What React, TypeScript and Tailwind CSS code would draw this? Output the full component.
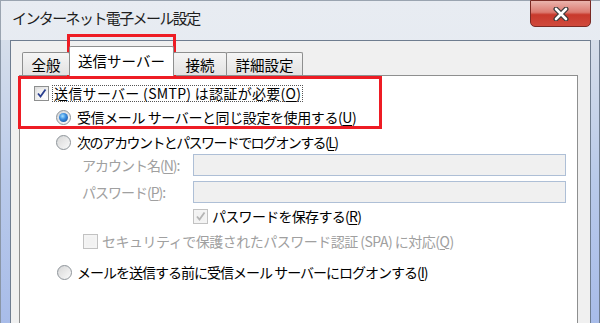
import React from "react";

function Check({ checked, disabled }: { checked?: boolean; disabled?: boolean }) {
  return (
    <span
      className={
        "relative flex h-[15px] w-[15px] shrink-0 items-center justify-center border " +
        (disabled ? "border-[#c2c2c2] bg-[#f4f4f4]" : "border-[#8e8f8f] bg-[linear-gradient(135deg,#dcdcdc,#ffffff)]")
      }
    >
      <span className={"absolute inset-[2px] " + (disabled ? "bg-[#f2f2f2]" : "bg-[linear-gradient(135deg,#e9e9e9,#ffffff)]")} />
      {checked && (
        <svg viewBox="0 0 13 13" className="relative h-[13px] w-[13px]">
          <path
            d="M3 6.5 L5.5 9.5 L10.5 2.5"
            fill="none"
            stroke={disabled ? "#b4b4b4" : "#2a3f8f"}
            strokeWidth="1.8"
          />
        </svg>
      )}
    </span>
  );
}

function Radio({ checked }: { checked?: boolean }) {
  return (
    <span className="flex h-[15px] w-[15px] shrink-0 items-center justify-center rounded-full border border-[#8e9499] bg-[linear-gradient(135deg,#d2d4d6,#fbfbfb)]">
      {checked ? (
        <span className="h-[9px] w-[9px] rounded-full bg-[radial-gradient(circle_at_40%_35%,#a6e1ff_0%,#3a8ee0_40%,#0d3f8a_100%)]" />
      ) : (
        <span className="h-[11px] w-[11px] rounded-full bg-[linear-gradient(135deg,#dadada,#f7f7f7)]" />
      )}
    </span>
  );
}

function U({ c }: { c: string }) {
  return <span className="underline decoration-1 underline-offset-[2px]">{c}</span>;
}

export default function App() {
  return (
    <div className="relative flex h-[323px] w-[600px] flex-col overflow-hidden bg-[linear-gradient(180deg,#e8ecf2_0%,#dde4ee_100%)] font-['Noto_Sans_CJK_JP',sans-serif] text-[14px] text-black">
      {/* title bar */}
      <div className="flex h-[40px] shrink-0 items-start justify-between border-l border-t border-[#9aa4b0]">
        <div className="ml-[11px] mt-[6px] text-[15px] leading-[22px] tracking-[-1.6px] text-[#1e1e1e]">インターネット電子メール設定</div>
        <div className="mr-[9px] mt-[-1px] flex h-[27px] w-[61px] items-center justify-center rounded-b-[5px] border border-[#7a2a24] bg-[linear-gradient(180deg,#eab4ad_0%,#dc7a70_45%,#c8392c_55%,#d04a3c_100%)]">
          <svg viewBox="0 0 18 14" className="h-[14px] w-[18px]">
            <path d="M4 2 L14 12 M14 2 L4 12" stroke="#3b3b3b" strokeWidth="5" strokeLinecap="round" />
            <path d="M4 2 L14 12 M14 2 L4 12" stroke="#ffffff" strokeWidth="2.6" strokeLinecap="round" />
          </svg>
        </div>
      </div>

      {/* body */}
      <div className="flex min-h-0 flex-1">
        <div className="w-[10px] shrink-0 border-l border-[#8a96a6] bg-[linear-gradient(180deg,#d6deea_0%,#b9caea_50%,#a8bce9_100%)]" />
        <div className="flex min-w-0 flex-1 flex-col border-l border-r border-t border-[#6f7d90] bg-[#f0f0f0]">
          {/* tab strip */}
          <div className="relative z-10 flex h-[34px] shrink-0 items-end pl-[11px]">
            <div className="flex h-[23px] w-[48px] items-center justify-center rounded-t-[2px] border border-b-0 border-[#8e8f8f] bg-[linear-gradient(180deg,#f5f5f5,#e2e2e2)] pt-[1px] text-[14.5px]">
              全般
            </div>
            <div className="-mb-[1px] -ml-[1px] flex h-[30px] w-[105px] items-start justify-center rounded-t-[2px] border border-b-0 border-[#8e8f8f] bg-white pt-[3px] text-[14.5px]">
              送信サーバー
            </div>
            <div className="-ml-[1px] flex h-[23px] w-[54px] items-center justify-center rounded-t-[2px] border border-b-0 border-[#8e8f8f] bg-[linear-gradient(180deg,#f5f5f5,#e2e2e2)] pt-[1px] text-[14.5px]">
              接続
            </div>
            <div className="-ml-[1px] flex h-[23px] w-[77px] items-center justify-center rounded-t-[2px] border border-b-0 border-[#8e8f8f] bg-[linear-gradient(180deg,#f5f5f5,#e2e2e2)] pt-[1px] text-[14.5px]">
              詳細設定
            </div>
          </div>

          {/* tab page */}
          <div className="ml-[8px] flex w-[559px] flex-1 flex-col border border-b-0 border-[#8e8f8f] bg-white">
            <div className="mt-[8px] flex h-[18px] items-center pl-[14px]">
              <Check checked />
              <span className="ml-[3px] border border-dotted border-[#555] px-[1px] leading-[15px] tracking-[0.3px]">
                送信サーバー (SMTP) は認証が必要(<U c="O" />)
              </span>
            </div>
            <div className="mt-[6px] flex h-[18px] items-center pl-[36px]">
              <Radio checked />
              <span className="ml-[6px] tracking-[-0.4px]">
                受信メール サーバーと同じ設定を使用する(<U c="U" />)
              </span>
            </div>
            <div className="mt-[7px] flex h-[18px] items-center pl-[36px]">
              <Radio />
              <span className="ml-[6px] tracking-[-1.6px]">
                次のアカウントとパスワードでログオンする(<U c="L" />)
              </span>
            </div>
            <div className="mt-[3px] flex h-[22px] items-center pl-[62px]">
              <span className="w-[111px] tracking-[-1px] text-[#a0a0a0]">
                アカウント名(<U c="N" />):
              </span>
              <div className="h-[22px] w-[373px] border border-[#aebfd6] bg-[#f0f0f0]" />
            </div>
            <div className="mt-[5px] flex h-[22px] items-center pl-[62px]">
              <span className="w-[111px] tracking-[-1px] text-[#a0a0a0]">
                パスワード(<U c="P" />):
              </span>
              <div className="h-[22px] w-[373px] border border-[#aebfd6] bg-[#f0f0f0]" />
            </div>
            <div className="mt-[4px] flex h-[18px] items-center pl-[173px]">
              <Check checked disabled />
              <span className="ml-[4px] tracking-[-0.7px]">
                パスワードを保存する(<U c="R" />)
              </span>
            </div>
            <div className="mt-[7px] flex h-[18px] items-center pl-[63px]">
              <Check disabled />
              <span className="ml-[4px] tracking-[-0.5px] text-[#a0a0a0]">
                セキュリティで保護されたパスワード認証 (SPA) に対応(<U c="Q" />)
              </span>
            </div>
            <div className="mt-[13px] flex h-[18px] items-center pl-[37px]">
              <Radio />
              <span className="ml-[5px] tracking-[-1px]">
                メールを送信する前に受信メール サーバーにログオンする(<U c="I" />)
              </span>
            </div>
          </div>
        </div>
        <div className="w-[9px] shrink-0 border-r border-[#6f7d90] bg-[linear-gradient(180deg,#d6deea_0%,#b9caea_50%,#a8bce9_100%)]" />
      </div>

      {/* annotation boxes */}
      <div className="pointer-events-none absolute left-[67px] top-[34px] h-[43px] w-[109px] border-[3px] border-[#ee1c24]" />
      <div className="pointer-events-none absolute left-[18px] top-[76px] h-[53px] w-[364px] border-[3px] border-[#ee1c24]" />
    </div>
  );
}
